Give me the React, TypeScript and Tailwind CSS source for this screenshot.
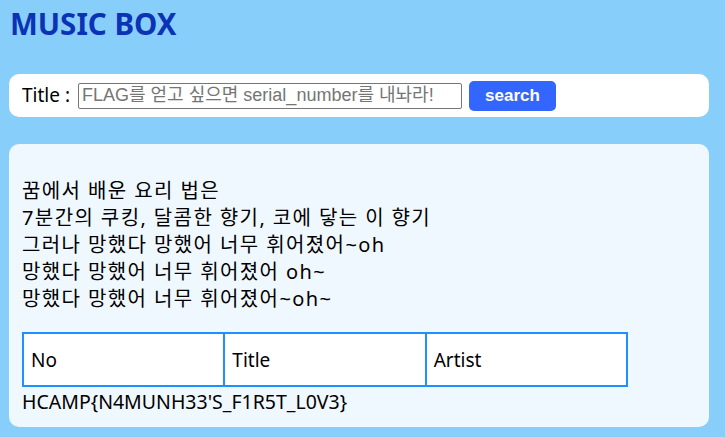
export default function App() {
  const lyrics = [
    '꿈에서 배운 요리 법은',
    '7분간의 쿠킹, 달콤한 향기, 코에 닿는 이 향기',
    '그러나 망했다 망했어 너무 휘어졌어~oh',
    '망했다 망했어 너무 휘어졌어 oh~',
    '망했다 망했어 너무 휘어졌어~oh~',
  ]

  return (
    <div className="min-h-[437px] bg-[#87cefa] pl-[9px] pr-[16px] pt-[5px] pb-3 text-black [font-family:'Noto_Sans','Noto_Sans_CJK_KR',sans-serif]">
      <h1 className="pl-px text-[29.5px] leading-[38px] font-bold text-[#0c33b5]">MUSIC BOX</h1>

      <div className="mt-[31px] flex h-[43px] items-center rounded-[10px] bg-white px-[13px]">
        <span className="text-[19px]">Title :</span>
        <input
          type="text"
          placeholder="FLAG를 얻고 싶으면 serial_number를 내놔라!"
          className="ml-[8px] h-[26px] w-[384px] rounded-[2px] border border-[#767676] px-[3px] text-[18px] placeholder:text-[#757575] [font-family:'Liberation_Sans','Noto_Sans_CJK_KR',sans-serif]"
        />
        <button className="ml-[7px] h-[30px] w-[87px] rounded-[5px] bg-[#3366ff] text-[17px] font-bold text-white [font-family:'Liberation_Sans',sans-serif]">
          search
        </button>
      </div>

      <div className="mt-[27px] rounded-[10px] bg-[#f0f8ff] px-[13px] pt-[33px] pb-[13px]">
        <div className="text-[20px] leading-[27px] tracking-[1.4px]">
          {lyrics.map((line, i) => (
            <div key={i}>{line}</div>
          ))}
        </div>

        <table className="mt-[20px] w-[606px] table-fixed border-collapse bg-white text-[19px]">
          <tbody>
            <tr className="h-[53px]">
              <td className="border-2 border-[#1e90ff] px-[7px] pt-[2px]">No</td>
              <td className="border-2 border-[#1e90ff] px-[7px] pt-[2px]">Title</td>
              <td className="border-2 border-[#1e90ff] px-[7px] pt-[2px]">Artist</td>
            </tr>
          </tbody>
        </table>

        <div className="text-[19.5px] leading-[24px] pt-[3px]">HCAMP{'{'}N4MUNH33'S_F1R5T_L0V3{'}'}</div>
      </div>
    </div>
  )
}
